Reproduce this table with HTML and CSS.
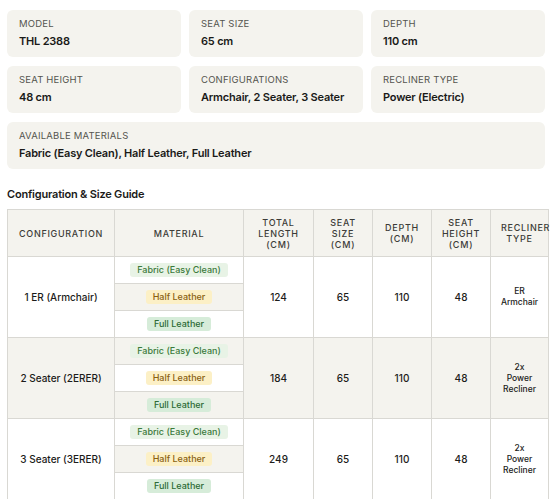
FILE: index.html
```html
<!DOCTYPE html>
<html>
<head>
<meta charset="utf-8">
<link rel="stylesheet" href="styles.css">
</head>
<body>
<div class="page">
  <div class="specs">
    <div class="spec"><div class="label">Model</div><div class="value">THL 2388</div></div>
    <div class="spec"><div class="label">Seat Size</div><div class="value">65 cm</div></div>
    <div class="spec"><div class="label">Depth</div><div class="value">110 cm</div></div>
    <div class="spec"><div class="label">Seat Height</div><div class="value">48 cm</div></div>
    <div class="spec"><div class="label">Configurations</div><div class="value">Armchair, 2 Seater, 3 Seater</div></div>
    <div class="spec"><div class="label">Recliner Type</div><div class="value">Power (Electric)</div></div>
    <div class="spec wide"><div class="label">Available Materials</div><div class="value">Fabric (Easy Clean), Half Leather, Full Leather</div></div>
  </div>
  <h2 class="title">Configuration &amp; Size Guide</h2>
  <div class="table-wrap">
    <table class="guide">
      <colgroup>
        <col class="c-config"><col class="c-mat"><col class="c-len"><col class="c-num"><col class="c-num"><col class="c-num"><col class="c-rec">
      </colgroup>
      <thead>
        <tr>
          <th>Configuration</th>
          <th>Material</th>
          <th>Total<br>Length<br>(cm)</th>
          <th>Seat<br>Size<br>(cm)</th>
          <th>Depth<br>(cm)</th>
          <th>Seat<br>Height<br>(cm)</th>
          <th class="rec-h">Recliner<br>Type</th>
        </tr>
      </thead>
      <tbody>
        <tr>
          <td class="conf">1 ER (Armchair)</td>
          <td class="mats">
            <div class="mat"><span class="badge fabric">Fabric (Easy Clean)</span></div>
            <div class="mat alt"><span class="badge half">Half Leather</span></div>
            <div class="mat"><span class="badge full">Full Leather</span></div>
          </td>
          <td>124</td><td>65</td><td>110</td><td>48</td>
          <td class="rec">ER<br>Armchair</td>
        </tr>
        <tr class="shade">
          <td class="conf">2 Seater (2ERER)</td>
          <td class="mats">
            <div class="mat alt"><span class="badge fabric">Fabric (Easy Clean)</span></div>
            <div class="mat white"><span class="badge half">Half Leather</span></div>
            <div class="mat alt"><span class="badge full">Full Leather</span></div>
          </td>
          <td>184</td><td>65</td><td>110</td><td>48</td>
          <td class="rec">2x<br>Power<br>Recliner</td>
        </tr>
        <tr>
          <td class="conf">3 Seater (3ERER)</td>
          <td class="mats">
            <div class="mat"><span class="badge fabric">Fabric (Easy Clean)</span></div>
            <div class="mat alt"><span class="badge half">Half Leather</span></div>
            <div class="mat"><span class="badge full">Full Leather</span></div>
          </td>
          <td>249</td><td>65</td><td>110</td><td>48</td>
          <td class="rec">2x<br>Power<br>Recliner</td>
        </tr>
      </tbody>
    </table>
  </div>
</div>
</body>
</html>
```

FILE: styles.css
```css
* { box-sizing: border-box; }
html, body { margin: 0; padding: 0; background: #fff; }
body {
  font-family: Inter, "Noto Sans", "Liberation Sans", sans-serif;
  color: #1c1c1a;
  overflow: hidden;
}
.page {
  padding: 10px 6px 0 7px;
}
.specs {
  display: grid;
  grid-template-columns: repeat(3, 1fr);
  column-gap: 8px;
  row-gap: 9px;
}
.spec {
  background: #f4f3ee;
  border-radius: 6px;
  height: 47px;
  padding: 8px 12px 0 12px;
}
.spec.wide { grid-column: 1 / span 3; }
.label {
  font-size: 9.5px;
  text-transform: uppercase;
  letter-spacing: 0.2px;
  color: #55554f;
  line-height: 12px;
}
.value {
  margin-top: 4px;
  font-size: 11px;
  font-weight: 600;
  line-height: 14px;
  letter-spacing: -0.2px;
  color: #1a1a18;
}
.title {
  margin: 18px 0 0 0;
  font-size: 11px;
  font-weight: 600;
  line-height: 14px;
  letter-spacing: -0.2px;
  color: #1a1a18;
}
.table-wrap {
  margin-top: 8px;
  margin-right: -6px;
  overflow: hidden;
}
.guide {
  border-collapse: collapse;
  table-layout: fixed;
  width: 541px;
  font-size: 10px;
}
.c-config { width: 107px; }
.c-mat { width: 129px; }
.c-len { width: 70px; }
.c-num { width: 59px; }
.c-rec { width: 58px; }
.guide th, .guide td {
  border: 1px solid #d9d8d3;
  text-align: center;
  vertical-align: middle;
}
.guide th {
  background: #f4f3ee;
  height: 47px;
  padding: 0 4px;
  font-size: 9px;
  font-weight: 500;
  text-transform: uppercase;
  letter-spacing: 0.7px;
  line-height: 11px;
  color: #3c3c38;
  white-space: nowrap;
}
.guide th.rec-h { padding: 0 10px; }
.guide td {
  height: 80px;
  padding: 0 4px;
  font-size: 10px;
  font-weight: 500;
  color: #1c1c1a;
}
.guide td.rec {
  font-size: 8.5px;
  line-height: 11px;
}
.guide tr.shade td { background: #f4f3ee; }
.guide td.mats { padding: 0; }
.mat {
  height: 26px;
  display: flex;
  align-items: center;
  justify-content: center;
  background: #fff;
}
.mat + .mat { border-top: 1px solid #d9d8d3; height: 27px; }
.mat.alt { background: #f4f3ee; }
.mat.white { background: #fff; }
.badge {
  font-size: 9px;
  font-weight: 500;
  line-height: 14px;
  padding: 0 7px;
  border-radius: 3px;
}
.badge.fabric { background: #e8f3e6; color: #3b7a3b; }
.badge.half { background: #fcf0c6; color: #8a6212; }
.badge.full { background: #d6ecd9; color: #2d6a36; }
```
